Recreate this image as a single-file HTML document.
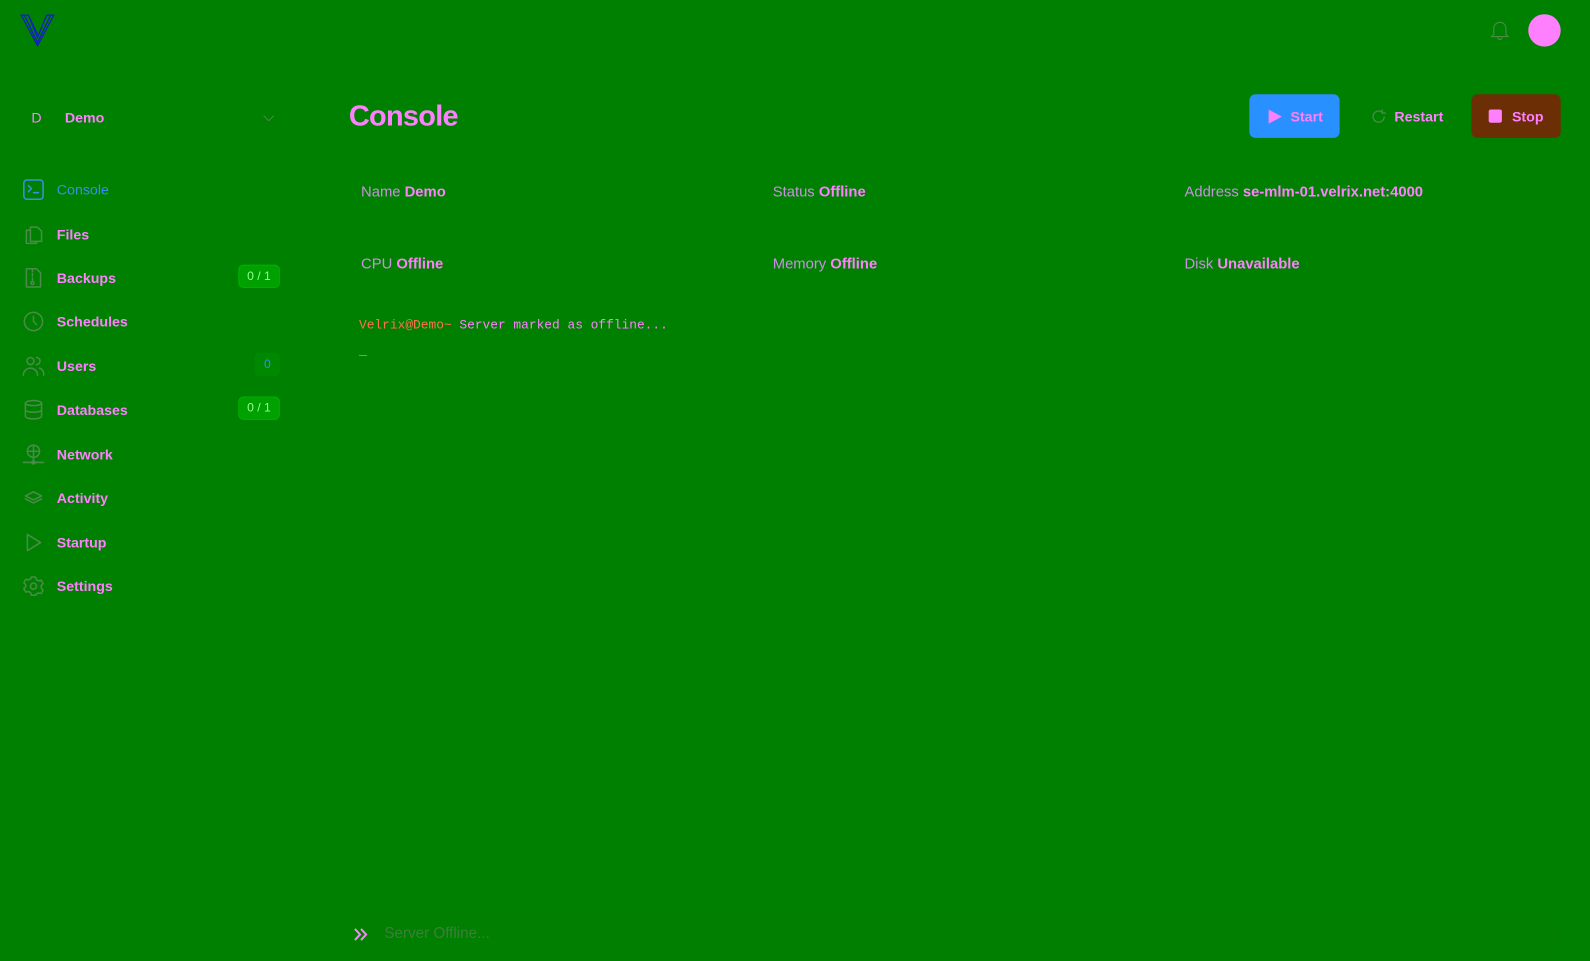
<!DOCTYPE html>
<html><head><meta charset="utf-8"><style>
*{margin:0;padding:0;box-sizing:border-box}
html,body{width:1590px;height:961px;background:#008000;overflow:hidden}
body{font-family:"Liberation Sans",sans-serif;color:#ff80ff}
#w{position:absolute;left:0;top:0;width:1568px;height:948px;transform:scale(1.0141);transform-origin:0 0}
.a{position:absolute}
.nav{position:absolute;left:22px;height:24px;display:flex;align-items:center;width:254px}
.nav svg{width:22px;height:22px;fill:none;stroke:#4c8a4c;stroke-width:1.5;stroke-linecap:round;stroke-linejoin:round}
.nav span{margin-left:12px;font-weight:bold;font-size:14px}
.badge{position:absolute;right:0;top:-1px;height:23px;padding:0 8px;border:1px solid #00b000;background:#00a000;border-radius:5px;color:#90ff90;font-size:12px;line-height:21px}
.lbl{position:absolute;font-size:14.6px;color:#c890e0}
.lbl b{color:#ff80ff}
.btn{position:absolute;top:93px;height:43px;border-radius:6px;display:flex;align-items:center;justify-content:center;font-weight:bold;font-size:14px}
</style></head><body><div id="w">
<svg class="a" style="left:20px;top:14px" width="34" height="32" viewBox="0 0 34 32" fill="none" stroke="#1020c0" stroke-width="1.3"><path d="M1 1h7l9 22 9-22h7L17 31z"/><path d="M4 1l13 27 13-27"/><path d="M8 1l9 19"/></svg>
<svg class="a" style="left:1470px;top:20px" width="18" height="20" viewBox="0 0 18 20" fill="none" stroke="#4c8a4c" stroke-width="1.1"><path d="M3 14V8a6 6 0 0112 0v6l2 2H1z"/><path d="M7 17a2 2 0 004 0"/></svg>
<div class="a" style="left:1507px;top:14px;width:32px;height:32px;border-radius:50%;background:#ff80ff"></div>

<div class="a" style="left:31px;top:108px;font-size:14px">D</div>
<div class="a" style="left:64px;top:108px;font-size:14px;font-weight:bold">Demo</div>
<svg class="a" style="left:259px;top:113px" width="12" height="8" fill="none" stroke="#4c8a4c" stroke-width="1"><path d="M1 1l5 5 5-5"/></svg>

<div class="nav" style="top:175px"><svg viewBox="0 0 22 22" style="stroke:#3a8ee8"><rect x="1.5" y="1.5" width="19" height="19" rx="3"/><path d="M6 7l3 3-3 3M11 14h5"/></svg><span style="color:#3a8ee8;font-weight:normal">Console</span></div>
<div class="nav" style="top:219px"><svg viewBox="0 0 22 22"><path d="M8 4h7l4 4v10H8z"/><path d="M8 7H4v13h10v-2"/></svg><span>Files</span></div>
<div class="nav" style="top:262px"><svg viewBox="0 0 22 22"><path d="M4 2h10l4 4v14H4z"/><path d="M10 3v2M10 7v2M10 11v2"/><circle cx="10" cy="16" r="1.5"/></svg><span>Backups</span><div class="badge">0 / 1</div></div>
<div class="nav" style="top:305px"><svg viewBox="0 0 22 22"><circle cx="11" cy="11" r="9"/><path d="M11 6v5l3 3"/></svg><span>Schedules</span></div>
<div class="nav" style="top:349px"><svg viewBox="0 0 22 22"><circle cx="8" cy="6" r="3.5"/><path d="M1 20a7 7 0 0114 0M14 2.5a3.5 3.5 0 010 7M17 13a6 6 0 014 7"/></svg><span>Users</span><div class="badge" style="background:#008800;border-color:#008a00;color:#3a8ee8">0</div></div>
<div class="nav" style="top:392px"><svg viewBox="0 0 22 22"><ellipse cx="11" cy="4.5" rx="8" ry="2.5"/><path d="M3 4.5v13c0 1.4 3.6 2.5 8 2.5s8-1.1 8-2.5v-13M3 11c0 1.4 3.6 2.5 8 2.5s8-1.1 8-2.5"/></svg><span>Databases</span><div class="badge">0 / 1</div></div>
<div class="nav" style="top:436px"><svg viewBox="0 0 22 22"><circle cx="11" cy="8" r="6"/><path d="M5 8h12M11 2v18M1 19h20"/><circle cx="11" cy="19" r="1.5"/></svg><span>Network</span></div>
<div class="nav" style="top:479px"><svg viewBox="0 0 22 22"><path d="M11 5l8 4-8 4-8-4z"/><path d="M3 12l8 4 8-4"/></svg><span>Activity</span></div>
<div class="nav" style="top:523px"><svg viewBox="0 0 22 22"><path d="M5 3l13 8-13 8z"/></svg><span>Startup</span></div>
<div class="nav" style="top:566px"><svg viewBox="0 0 22 22"><circle cx="11" cy="11" r="3"/><path d="M9 2h4l.7 2.5 2.3 1.3 2.5-.7 2 3.4-1.8 1.9v2.6l1.8 1.9-2 3.4-2.5-.7-2.3 1.3L13 20H9l-.7-2.5-2.3-1.3-2.5.7-2-3.4 1.8-1.9V9.5L1.5 7.6l2-3.4 2.5.7 2.3-1.3z"/></svg><span>Settings</span></div>

<div class="a" style="left:344px;top:99px;font-size:28.5px;font-weight:bold;letter-spacing:-0.7px">Console</div>
<div class="btn" style="left:1232px;width:89px;background:#2890ff"><svg width="16" height="16" style="margin-right:8px"><path d="M2 1l13 7-13 7z" fill="#ff80ff"/></svg>Start</div>
<div class="btn" style="left:1352px;width:72px;justify-content:flex-start"><svg width="16" height="16" fill="none" stroke="#4c8a4c" stroke-width="1.3" style="margin-right:7px"><path d="M13 8a5.5 5.5 0 11-2-4.3M11 1v3.5h3.5"/></svg>Restart</div>
<div class="btn" style="left:1451px;width:88px;background:#6b2e05"><div style="width:13px;height:13px;background:#ff80ff;border-radius:2px;margin-right:10px"></div>Stop</div>

<div class="lbl" style="left:356px;top:182px">Name <b>Demo</b></div>
<div class="lbl" style="left:762px;top:182px">Status <b>Offline</b></div>
<div class="lbl" style="left:1168px;top:182px">Address <b>se-mlm-01.velrix.net:4000</b></div>
<div class="lbl" style="left:356px;top:253px">CPU <b>Offline</b></div>
<div class="lbl" style="left:762px;top:253px">Memory <b>Offline</b></div>
<div class="lbl" style="left:1168px;top:253px">Disk <b>Unavailable</b></div>

<div class="a" style="left:354px;top:313px;font-family:'Liberation Mono',monospace;font-size:12.7px;white-space:pre"><span style="color:#ff7050">Velrix@Demo~</span> Server marked as offline...</div>
<div class="a" style="left:354px;top:338px;font-family:'Liberation Mono',monospace;font-size:13px">_</div>

<div class="a" style="left:344px;top:902px;width:1194px;height:40px;background:#007f00"></div>
<svg class="a" style="left:349px;top:915px" width="14" height="13" fill="none" stroke="#ff80ff" stroke-width="2"><path d="M1 1l5 5.5-5 5.5M7 1l5 5.5-5 5.5"/></svg>
<div class="a" style="left:379px;top:912px;font-size:15px;color:#3e7e3e">Server Offline...</div>
</div></body></html>
